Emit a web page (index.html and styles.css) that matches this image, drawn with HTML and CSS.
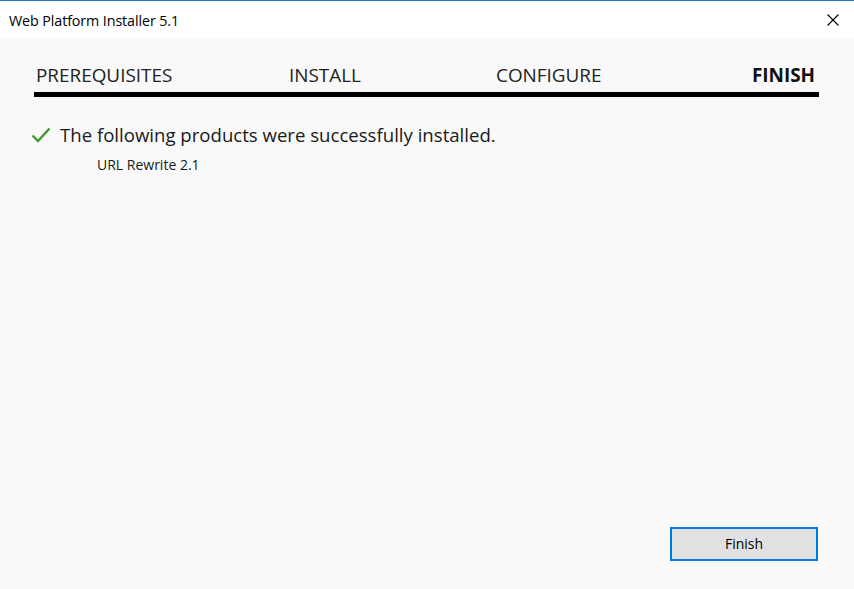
FILE: index.html
```html
<!DOCTYPE html>
<html>
<head>
<meta charset="utf-8">
<link rel="stylesheet" href="styles.css">
</head>
<body>
<div class="window">
  <div class="titlebar">
    <span class="title">Web Platform Installer 5.1</span>
    <span class="close" aria-label="Close">
      <svg width="12" height="12" viewBox="0 0 12 12"><path d="M0.5 0.5 L11.5 11.5 M11.5 0.5 L0.5 11.5" stroke="#000" stroke-width="1.1" fill="none"/></svg>
    </span>
  </div>
  <div class="content">
    <div class="steps">
      <span class="step s1">PREREQUISITES</span>
      <span class="step s2">INSTALL</span>
      <span class="step s3">CONFIGURE</span>
      <span class="step s4 active">FINISH</span>
    </div>
    <div class="rule"></div>
    <div class="message">
      <svg class="check" width="20" height="16" viewBox="0 0 20 16"><path d="M1.5 8.5 L7 14 L18.5 1.5" stroke="#3b9a2b" stroke-width="2.4" fill="none"/></svg>
      <span class="msg-text">The following products were successfully installed.</span>
    </div>
    <div class="product">URL Rewrite 2.1</div>
    <div class="spacer"></div>
    <div class="actions">
      <button class="btn">Finish</button>
    </div>
  </div>
</div>
</body>
</html>
```
FILE: styles.css
```css
html, body {
  margin: 0;
  padding: 0;
  width: 854px;
  height: 589px;
  overflow: hidden;
}
body {
  font-family: "Open Sans", "Noto Sans", sans-serif;
  color: #1a1a1a;
  background: #f9f9f9;
}
.window {
  width: 854px;
  height: 589px;
  display: flex;
  flex-direction: column;
  box-sizing: border-box;
  border-top: 1px solid #2b79c2;
}
.titlebar {
  height: 38px;
  background: #ffffff;
  display: flex;
  align-items: center;
  justify-content: space-between;
  padding: 0 15px 0 9px;
  flex: none;
}
.title {
  font-size: 14.3px;
  color: #000;
  letter-spacing: -0.1px;
}
.close {
  display: flex;
  width: 12px;
  height: 12px;
}
.content {
  flex: 1;
  display: flex;
  flex-direction: column;
  padding: 0 35px 28px 34px;
}
.steps {
  display: grid;
  grid-template-columns: 253px 207px 255px 1fr;
  padding: 22px 4px 0 2px;
  font-size: 18.9px;
  line-height: 28px;
  color: #222;
}
.step { white-space: nowrap; }
.s4 { justify-self: end; }
.active { font-weight: 700; color: #111; }
.rule {
  height: 5px;
  background: #000;
  margin-top: 3px;
}
.message {
  display: flex;
  align-items: center;
  margin-top: 25px;
}
.check {
  margin-left: -3px;
  margin-right: 9px;
}
.msg-text {
  font-size: 18.6px;
  color: #1a1a1a;
}
.product {
  margin-top: 8px;
  padding-left: 63px;
  font-size: 14px;
  color: #1a1a1a;
}
.spacer { flex: 1; }
.actions {
  display: flex;
  justify-content: flex-end;
  padding-right: 1px;
}
.btn {
  width: 148px;
  height: 34px;
  border: 2px solid #0078d7;
  background: #e1e1e1;
  font-family: "Open Sans", "Noto Sans", sans-serif;
  font-size: 14px;
  color: #000;
  padding: 0 0 2px;
}
```
